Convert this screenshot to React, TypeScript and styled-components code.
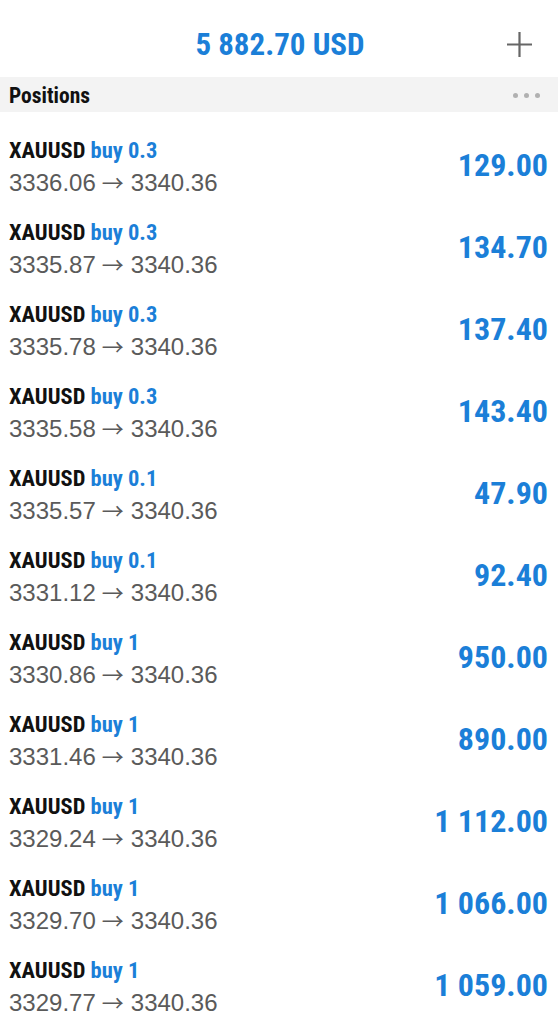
import React from "react";
import styled, { createGlobalStyle } from "styled-components";

const GlobalStyle = createGlobalStyle`
  body {
    margin: 0;
    background: #ffffff;
    font-family: "Liberation Sans", Arial, sans-serif;
  }
`;

const BLUE = "#1b7fd8";

const Screen = styled.div`
  width: 558px;
  height: 1024px;
  overflow: hidden;
  background: #ffffff;
`;

const TopBar = styled.header`
  position: relative;
  height: 77px;
  display: flex;
  align-items: center;
  justify-content: center;
`;

const Condensed = styled.div`
  font-family: Roboto, "Open Sans", sans-serif;
  font-stretch: condensed;
  font-weight: 700;
`;

const Balance = styled(Condensed)`
  font-size: 31px;
  color: ${BLUE};
  margin-top: 12px;
  margin-left: 2px;
`;

const PlusButton = styled.button`
  position: absolute;
  right: 25px;
  top: 31px;
  width: 27px;
  height: 27px;
  padding: 0;
  border: none;
  background: none;
  display: flex;
`;

const SectionBar = styled.div`
  height: 35px;
  background: #f3f3f3;
  display: flex;
  align-items: center;
  justify-content: space-between;
  padding: 0 18px 0 9px;
`;

const SectionTitle = styled(Condensed)`
  font-size: 21.5px;
  color: #111;
  margin-top: 1px;
`;

const Dots = styled.div`
  display: flex;
  gap: 6px;
  margin-top: 2px;
`;

const Dot = styled.span`
  width: 5px;
  height: 5px;
  border-radius: 50%;
  background: #b0b0b0;
`;

const List = styled.div`
  display: flex;
  flex-direction: column;
  padding-top: 24px;
`;

const Row = styled.div`
  height: 82px;
  display: flex;
  justify-content: space-between;
  padding: 0 10px 0 9px;
`;

const Info = styled.div`
  display: flex;
  flex-direction: column;
`;

const Title = styled(Condensed)`
  font-size: 22.5px;
  line-height: 28px;
  color: #111;
`;

const Side = styled.span`
  color: ${BLUE};
`;

const Prices = styled.div`
  font-size: 24px;
  line-height: 30px;
  color: #5a5a5a;
  margin-top: 2px;
`;

const Arrow = styled.span`
  font-family: "Noto Sans CJK SC", sans-serif;
  font-size: 22px;
  margin: 0 7px 0 6px;
`;

const Profit = styled(Condensed)`
  font-size: 32px;
  color: ${BLUE};
  margin-top: 10px;
`;

const positions = [
  { volume: "0.3", open: "3336.06", profit: "129.00" },
  { volume: "0.3", open: "3335.87", profit: "134.70" },
  { volume: "0.3", open: "3335.78", profit: "137.40" },
  { volume: "0.3", open: "3335.58", profit: "143.40" },
  { volume: "0.1", open: "3335.57", profit: "47.90" },
  { volume: "0.1", open: "3331.12", profit: "92.40" },
  { volume: "1", open: "3330.86", profit: "950.00" },
  { volume: "1", open: "3331.46", profit: "890.00" },
  { volume: "1", open: "3329.24", profit: "1 112.00" },
  { volume: "1", open: "3329.70", profit: "1 066.00" },
  { volume: "1", open: "3329.77", profit: "1 059.00" },
];

const App: React.FC = () => {
  return (
    <Screen>
      <GlobalStyle />
      <TopBar>
        <Balance>5 882.70 USD</Balance>
        <PlusButton aria-label="New order">
          <svg width="27" height="27" viewBox="0 0 27 27">
            <path d="M13.5 1v25M1 13.5h25" stroke="#666" strokeWidth="2.2" fill="none" />
          </svg>
        </PlusButton>
      </TopBar>

      <SectionBar>
        <SectionTitle>Positions</SectionTitle>
        <Dots>
          <Dot />
          <Dot />
          <Dot />
        </Dots>
      </SectionBar>

      <List>
        {positions.map((p, i) => (
          <Row key={i}>
            <Info>
              <Title>
                XAUUSD <Side>buy {p.volume}</Side>
              </Title>
              <Prices>
                {p.open}
                <Arrow>→</Arrow>
                3340.36
              </Prices>
            </Info>
            <Profit>{p.profit}</Profit>
          </Row>
        ))}
      </List>
    </Screen>
  );
};

export default App;
